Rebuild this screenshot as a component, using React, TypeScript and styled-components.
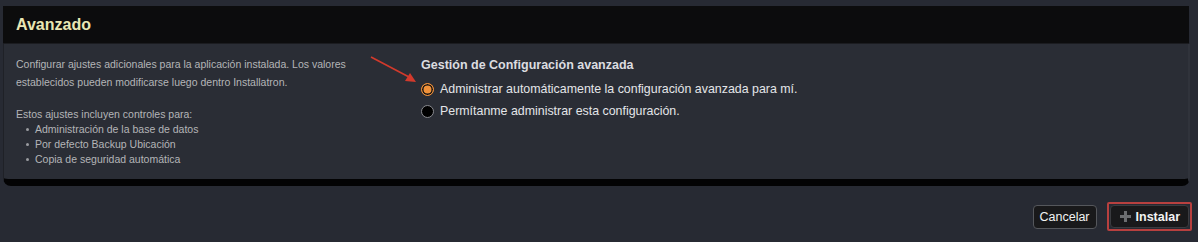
import React from "react";
import styled, { createGlobalStyle } from "styled-components";

const Global = createGlobalStyle`
  html, body { margin: 0; padding: 0; background: #272a33; }
  body { font-family: "Liberation Sans", Arial, sans-serif; }
`;

const Page = styled.div`
  width: 1198px;
  height: 242px;
  box-sizing: border-box;
  padding: 6px 8px 0 3px;
  display: flex;
  flex-direction: column;
`;

const Panel = styled.section`
  display: flex;
  flex-direction: column;
`;

const Header = styled.div`
  height: 37px;
  background: #0c0c0d;
  display: flex;
  align-items: center;
  padding-left: 13px;
  margin-right: 1px;
  border-bottom: 1px solid #1b1c20;
`;

const Title = styled.h2`
  margin: 0;
  font-size: 16px;
  font-weight: bold;
  color: #e9e7b4;
`;

const Body = styled.div`
  position: relative;
  background: #2a2d35;
  display: grid;
  grid-template-columns: 405px 1fr;
  padding: 11px 0 0 12px;
  height: 124px;
  border-right: 2px solid #30333b;
  border-bottom: 7px solid #030304;
  border-left: 1px solid #1f2127;
  border-radius: 0 0 8px 8px;
`;

const LeftCol = styled.div`
  font-size: 10.5px;
  color: #b4b5b8;
`;

const Para = styled.p`
  margin: 0 0 16px 0;
  line-height: 18px;
`;

const Intro = styled.p`
  margin: 0;
  line-height: 15px;
`;

const List = styled.ul`
  margin: 0;
  padding: 0;
  line-height: 15px;
  list-style: none;
`;

const Item = styled.li`
  display: flex;
  align-items: center;
  padding-left: 10px;
  gap: 6px;
  &::before {
    content: "";
    width: 3px;
    height: 3px;
    border-radius: 50%;
    background: #9a9ba0;
    flex: none;
  }
`;

const RightCol = styled.div`
  display: flex;
  flex-direction: column;
  padding-top: 3px;
`;

const Heading = styled.div`
  font-size: 12.5px;
  font-weight: bold;
  color: #dcdde0;
  margin-bottom: 6px;
`;

const Option = styled.label`
  display: flex;
  align-items: center;
  gap: 6px;
  height: 22px;
  font-size: 12.4px;
  color: #e4e5e8;
`;

const Radio = styled.span<{ $checked?: boolean }>`
  width: 13px;
  height: 13px;
  box-sizing: border-box;
  border-radius: 50%;
  border: 1.5px solid ${(p) => (p.$checked ? "#f0913a" : "#8a8b90")};
  background: ${(p) => (p.$checked ? "#f0913a" : "#000")};
  box-shadow: ${(p) => (p.$checked ? "inset 0 0 0 1.5px #111" : "none")};
  flex: none;
`;

const Arrow = styled.svg`
  position: absolute;
  left: 365px;
  top: 10px;
  overflow: visible;
`;

const Footer = styled.div`
  display: flex;
  justify-content: flex-end;
  align-items: center;
  gap: 10px;
  margin-top: 16px;
  margin-right: -2px;
`;

const Button = styled.button`
  font-family: "Liberation Sans", Arial, sans-serif;
  height: 24px;
  padding: 0 6px;
  border-radius: 4px;
  background: #19191b;
  border: 1px solid #55575c;
  color: #f2f2f2;
  font-size: 12.5px;
  display: flex;
  align-items: center;
  gap: 5px;
`;

const Highlight = styled.div`
  border: 2px solid #b8403f;
  padding: 1px;
  border-radius: 2px;
`;

const Primary = styled(Button)`
  font-weight: bold;
  border-color: #3a3b3f;
  padding: 0 8px 0 9px;
  height: 23px;
`;

export default function App() {
  return (
    <>
      <Global />
      <Page>
        <Panel>
          <Header>
            <Title>Avanzado</Title>
          </Header>
          <Body>
            <LeftCol>
              <Para>
                Configurar ajustes adicionales para la aplicación instalada. Los valores
                <br />
                establecidos pueden modificarse luego dentro Installatron.
              </Para>
              <Intro>Estos ajustes incluyen controles para:</Intro>
              <List>
                <Item>Administración de la base de datos</Item>
                <Item>Por defecto Backup Ubicación</Item>
                <Item>Copia de seguridad automática</Item>
              </List>
            </LeftCol>
            <RightCol>
              <Heading>Gestión de Configuración avanzada</Heading>
              <Option>
                <Radio $checked />
                Administrar automáticamente la configuración avanzada para mí.
              </Option>
              <Option>
                <Radio />
                Permítanme administrar esta configuración.
              </Option>
            </RightCol>
            <Arrow width="50" height="30" viewBox="0 0 50 30">
              <line x1="2" y1="3" x2="40" y2="23" stroke="#d23a2c" strokeWidth="1.6" />
              <polygon points="47,28 36,27 41,19" fill="#d23a2c" />
            </Arrow>
          </Body>
        </Panel>
        <Footer>
          <Button>Cancelar</Button>
          <Highlight>
            <Primary>
              <svg width="11" height="11" viewBox="0 0 11 11">
                <rect x="4" y="0" width="3" height="11" fill="#6c6d70" />
                <rect x="0" y="4" width="11" height="3" fill="#6c6d70" />
              </svg>
              Instalar
            </Primary>
          </Highlight>
        </Footer>
      </Page>
    </>
  );
}
